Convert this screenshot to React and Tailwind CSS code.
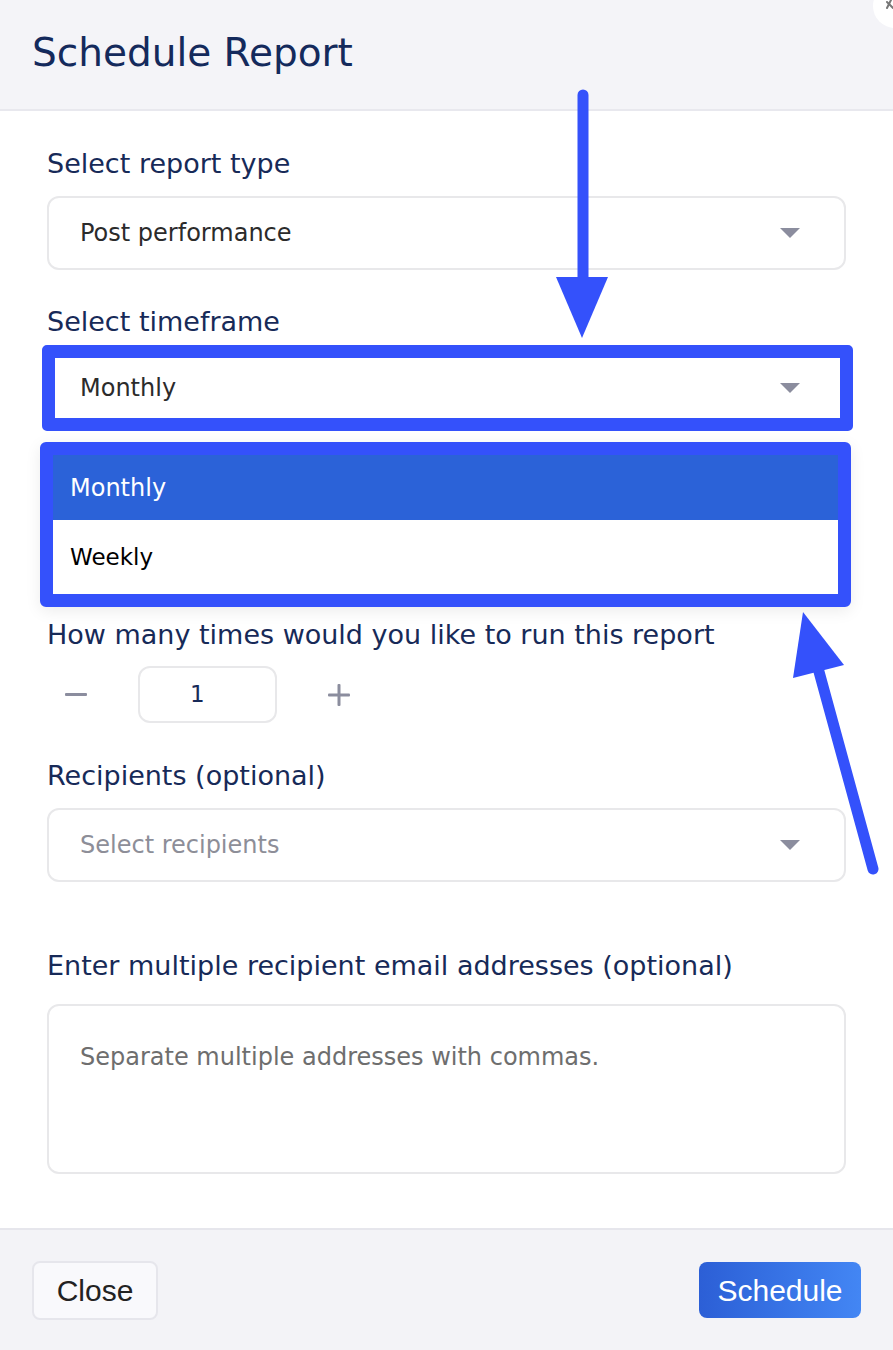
import { useState } from "react";

const font = { fontFamily: '"DejaVu Sans", "Noto Sans", sans-serif' };

function Caret(){
  return (
    <svg width="20" height="10" viewBox="0 0 20 10" className="shrink-0"><path d="M0 0 H20 L10 10 Z" fill="#8b8d9e"/></svg>
  );
}

function Select({ value, placeholder }){
  return (
    <div className="h-[74px] rounded-xl border-2 border-[#e8e8ea] bg-white flex items-center justify-between pl-[31px] pr-[44px]">
      <span className={"text-[24px] "+(value?"text-[#2b2b2b]":"text-[#8d8e98]")}>{value||placeholder}</span>
      <Caret/>
    </div>
  );
}

function Label({ children, className="" }){
  return <div className={"text-[27px] leading-[36px] text-[#172a58] "+className}>{children}</div>;
}

export default function App(){
  const [count,setCount]=useState(1);
  return (
    <div className="relative w-[893px] h-[1350px] overflow-hidden bg-white flex flex-col" style={font}>
      <div className="h-[111px] shrink-0 bg-[#f4f4f8] border-b-2 border-[#e8e8ee] flex items-center pl-[32px] pb-[2px]">
        <h1 className="text-[39px] text-[#142a5c]">Schedule Report</h1>
      </div>

      <div className="flex-1 flex flex-col pt-[35px] px-[47px] pb-[53px]">
        <Label>Select report type</Label>
        <div className="mt-[14px]"><Select value="Post performance"/></div>

        <Label className="mt-[34px]">Select timeframe</Label>
        <div className="mt-[5px] -ml-[5px] -mr-[7px] h-[86px] rounded-[5px] border-[13px] border-[#3451fb] bg-white flex items-center justify-between pl-[25px] pr-[40px]">
          <span className="text-[24px] text-[#2b2b2b]">Monthly</span>
          <Caret/>
        </div>

        <div className="mt-[11px] -ml-[7px] -mr-[5px] h-[165px] rounded-[6px] border-[13px] border-[#3451fb] bg-white shadow-[0_4px_16px_rgba(0,0,0,0.08)] flex flex-col overflow-hidden">
          <div className="h-[65px] shrink-0 bg-[#2b62d8] text-white text-[24px] flex items-center pl-[17px]">Monthly</div>
          <div className="flex-1 text-black text-[23px] flex items-center pl-[17px]">Weekly</div>
        </div>

        <Label className="mt-[10px]">How many times would you like to run this report</Label>
        <div className="mt-[13px] flex items-center h-[57px]">
          <button className="w-[60px] ml-[-1px] flex justify-center" onClick={()=>setCount(c=>Math.max(1,c-1))}>
            <svg width="22" height="4"><rect width="22" height="3" rx="1" fill="#8b8d9e"/></svg>
          </button>
          <div className="ml-[32px] w-[139px] h-[57px] rounded-xl border-2 border-[#e8e8ea] flex items-center pl-[50px] text-[23px] text-[#172a58]">{count}</div>
          <button className="ml-[42px] w-[40px] flex justify-center" onClick={()=>setCount(c=>c+1)}>
            <svg width="22" height="22"><rect x="0" y="9.5" width="22" height="3" rx="1" fill="#8b8d9e"/><rect x="9.5" y="0" width="3" height="22" rx="1" fill="#8b8d9e"/></svg>
          </button>
        </div>

        <Label className="mt-[35px]">Recipients (optional)</Label>
        <div className="mt-[14px]"><Select placeholder="Select recipients"/></div>

        <Label className="mt-[66px]">Enter multiple recipient email addresses (optional)</Label>
        <div className="mt-[20px] h-[170px] rounded-xl border-2 border-[#e8e8ea] bg-white pl-[31px] pt-[33px]">
          <span className="text-[24px] text-[#6e6e6e]">Separate multiple addresses with commas.</span>
        </div>
      </div>

      <div className="h-[122px] shrink-0 bg-[#f3f3f7] border-t-2 border-[#e6e6ec] flex items-center justify-between pl-[32px] pr-[32px]" style={{fontFamily:'"Liberation Sans", Arial, sans-serif'}}>
        <button className="w-[126px] h-[59px] rounded-lg border-2 border-[#e6e6ec] bg-[#f9f9fc] text-[30px] text-[#222]">Close</button>
        <button className="w-[162px] h-[56px] rounded-lg bg-gradient-to-r from-[#2c5fd6] to-[#4386f4] text-[30px] text-white">Schedule</button>
      </div>

      <div className="absolute left-[873px] top-[-16px] w-[44px] h-[44px] rounded-full bg-white" />

      <svg className="absolute left-0 top-0 pointer-events-none" width="893" height="1350">
        <path d="M887 2 L893 8" stroke="#777" strokeWidth="2" strokeLinecap="round"/>
        <path d="M893 -4 L887 8" stroke="#777" strokeWidth="2" strokeLinecap="round"/>
        <line x1="583" y1="95" x2="583" y2="285" stroke="#3451fb" strokeWidth="11" strokeLinecap="round"/>
        <polygon points="556,277 608,277 582,338" fill="#3451fb"/>
        <line x1="873" y1="869" x2="818" y2="668" stroke="#3451fb" strokeWidth="11" strokeLinecap="round"/>
        <polygon points="803,612 793,678 844,665" fill="#3451fb"/>
      </svg>
    </div>
  );
}
